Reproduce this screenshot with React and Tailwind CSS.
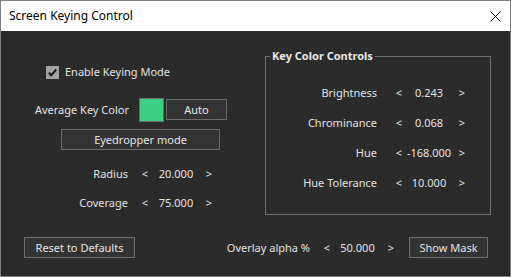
import React from "react";

function Btn({ className, children }) {
  return (
    <div
      className={
        "flex items-center justify-center h-[21px] border border-[#6b6b6b] bg-[#333333] text-[#e4e4e4] " +
        className
      }
    >
      {children}
    </div>
  );
}

function LeftSpin({ label, value }) {
  return (
    <div className="flex items-center h-[20px]">
      <span className="w-[127px] text-right">{label}</span>
      <span className="ml-[10px] w-[14px] text-center">&lt;</span>
      <span className="w-[48px] text-center">{value}</span>
      <span className="ml-[2px] w-[14px] text-center">&gt;</span>
    </div>
  );
}

function RightSpin({ label, value }) {
  return (
    <div className="flex items-center h-[20px]">
      <span className="w-[111px] text-right">{label}</span>
      <span className="ml-[15px] w-[14px] text-center">&lt;</span>
      <span className="w-[46px] text-center">{value}</span>
      <span className="ml-[3px] w-[14px] text-center">&gt;</span>
    </div>
  );
}

export default function App() {
  return (
    <div className="w-[511px] h-[277px] border border-[#7f7f7f] flex flex-col font-['Noto_Sans',sans-serif] text-[11px] leading-[16px] overflow-hidden">
      <div className="h-[30px] bg-white flex items-center justify-between pl-[8px] pr-[9px] text-[12px] text-black">
        <span>Screen Keying Control</span>
        <svg width="11" height="11" viewBox="0 0 11 11">
          <path d="M0.5 0.5 L10.5 10.5 M10.5 0.5 L0.5 10.5" stroke="#000" strokeWidth="1" fill="none" />
        </svg>
      </div>
      <div className="flex-1 bg-[#2b2b2b] text-[#e2e2e2] flex flex-col">
        <div className="flex">
          <div className="w-[264px] flex flex-col">
            <div className="mt-[31px] h-[20px] flex items-center ml-[45px]">
              <div className="w-[13px] h-[13px] bg-[#a3a3a3] flex items-center justify-center">
                <svg width="13" height="13" viewBox="0 0 13 13">
                  <path d="M2.8 6.8 L5.2 9.3 L10.2 3.5" stroke="#1c1c1c" strokeWidth="2" fill="none" />
                </svg>
              </div>
              <span className="ml-[6px]">Enable Keying Mode</span>
            </div>
            <div className="mt-[16px] flex items-start h-[24px]">
              <span className="w-[128px] text-right mt-[4px]">Average Key Color</span>
              <div className="ml-[10px] w-[25px] h-[24px] border border-[#6b6b6b] bg-[#3ccf83]" />
              <Btn className="ml-[2px] w-[61px] mt-[1px]">Auto</Btn>
            </div>
            <Btn className="mt-[7px] ml-[60px] w-[159px]">Eyedropper mode</Btn>
            <div className="mt-[14px]">
              <LeftSpin label="Radius" value="20.000" />
            </div>
            <div className="mt-[9px]">
              <LeftSpin label="Coverage" value="75.000" />
            </div>
          </div>
          <fieldset className="mt-[17px] w-[226px] h-[167px] border border-[#6e6e6e]">
            <legend className="ml-[4px] px-[2px] font-bold leading-[16px] text-[#e8e8e8]">Key Color Controls</legend>
            <div className="pt-[19px] flex flex-col gap-[10px]">
              <RightSpin label="Brightness" value="0.243" />
              <RightSpin label="Chrominance" value="0.068" />
              <RightSpin label="Hue" value="-168.000" />
              <RightSpin label="Hue Tolerance" value="10.000" />
            </div>
          </fieldset>
        </div>
        <div className="mt-[22px] flex items-center h-[21px] pr-[22px]">
          <Btn className="ml-[23px] w-[111px]">Reset to Defaults</Btn>
          <span className="ml-auto">Overlay alpha %</span>
          <span className="ml-[10px] w-[14px] text-center">&lt;</span>
          <span className="w-[47px] text-center">50.000</span>
          <span className="ml-[3px] w-[14px] text-center">&gt;</span>
          <Btn className="ml-[11px] w-[79px]">Show Mask</Btn>
        </div>
      </div>
    </div>
  );
}
